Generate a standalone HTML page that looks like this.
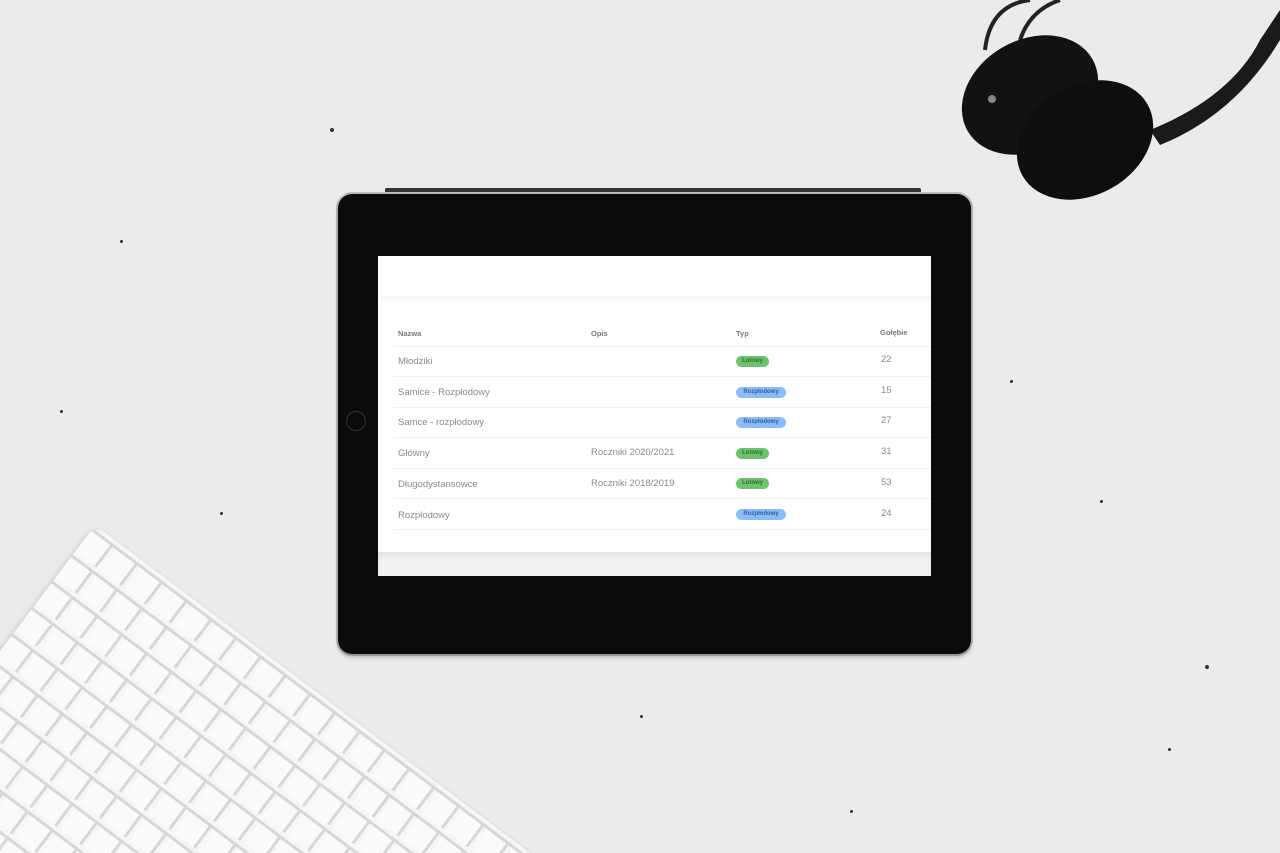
<!DOCTYPE html>
<html><head><style>
html,body{margin:0;padding:0;width:1280px;height:853px;overflow:hidden}
body{position:relative;background:#eaecec;font-family:"Liberation Sans",sans-serif}
.clip{position:absolute;left:0;top:0;width:1280px;height:853px;overflow:hidden}
.dot{position:absolute;background:#333;border-radius:50%}
.tab{position:absolute;left:338px;top:194px;width:633px;height:460px;background:#0b0b0b;border-radius:14px;box-shadow:0 3px 4px rgba(0,0,0,.25),0 0 0 2px #bdbdbd}
.bar{position:absolute;left:385px;top:188px;width:536px;height:7px;background:#333;border-radius:2px}
.screen{position:absolute;left:378px;top:256px;width:553px;height:320px;background:#fff;overflow:hidden}
.hdr{position:absolute;left:0;top:0;width:100%;height:40px;background:#fff;box-shadow:0 3px 6px rgba(0,0,0,.06)}
.foot{position:absolute;left:0;top:296px;width:100%;height:24px;background:#f3f3f3;box-shadow:inset 0 4px 6px rgba(0,0,0,.07)}
.t{position:absolute;font-size:9.5px;color:#8a8a8a;white-space:nowrap}
.h{font-size:7.5px;font-weight:bold;color:#777}
.line{position:absolute;left:15px;right:0;height:1px;background:#f0f0f0}
.b{position:absolute;height:11px;border-radius:6px;font-size:6px;line-height:11px;text-align:center;font-weight:bold}
.g{background:#6cc36e;color:#2d6d2e;width:33px}
.bl{background:#8cbcf7;color:#2d5fa8;width:50px}
.home{position:absolute;left:346px;top:411px;width:20px;height:20px;border-radius:50%;border:1px solid #333;box-sizing:border-box}
.kb{position:absolute;left:95px;top:525px;width:600px;height:330px;transform-origin:0 0;transform:rotate(37deg);background-color:#f5f6f6;border-radius:12px;box-shadow:0 2px 6px rgba(0,0,0,.2);
background-image:repeating-linear-gradient(0deg,transparent 0 26px,#d5d7d8 26px 29px,#f5f6f6 29px 33px),repeating-linear-gradient(90deg,#fafafa 0 24px,#d5d7d8 24px 27px,#f5f6f6 27px 31px)}
</style></head><body>
<div class="clip">
<div class="dot" style="left:330px;top:128px;width:4px;height:4px"></div>
<div class="dot" style="left:220px;top:512px;width:3px;height:3px"></div>
<div class="dot" style="left:1205px;top:665px;width:4px;height:4px"></div>
<div class="dot" style="left:1168px;top:748px;width:3px;height:3px"></div>
<div class="dot" style="left:850px;top:810px;width:3px;height:3px"></div>
<div class="dot" style="left:120px;top:240px;width:3px;height:3px"></div>
<div class="dot" style="left:1010px;top:380px;width:3px;height:3px"></div>
<div class="dot" style="left:640px;top:715px;width:3px;height:3px"></div>
<div class="dot" style="left:60px;top:410px;width:3px;height:3px"></div>
<div class="dot" style="left:1100px;top:500px;width:3px;height:3px"></div>
<div class="kb"></div>
</div>
<svg style="position:absolute;left:0;top:0" width="1280" height="853">
<path d="M1150 130 C1200 110 1240 80 1260 40 L1280 10 L1280 40 C1250 90 1210 125 1160 145 Z" fill="#1a1a1a"/>
<path d="M985 50 Q990 5 1030 0 M1020 40 Q1030 10 1060 0" stroke="#222" stroke-width="4" fill="none"/>
<ellipse cx="1030" cy="95" rx="72" ry="55" transform="rotate(-30 1030 95)" fill="#121212"/>
<ellipse cx="1085" cy="140" rx="72" ry="55" transform="rotate(-30 1085 140)" fill="#0e0e0e"/>
<circle cx="992" cy="99" r="4" fill="#888"/>
</svg>
<div class="bar"></div>
<div class="tab"></div>
<div class="home"></div>
<div class="screen">
<div class="hdr"></div>
<div class="t h" style="left:20px;top:73px">Nazwa</div>
<div class="t h" style="left:213px;top:73px">Opis</div>
<div class="t h" style="left:358px;top:73px">Typ</div>
<div class="t h" style="left:502px;top:72px">Gołębie</div>
<div class="line" style="top:90px"></div>
<div class="t" style="left:20px;top:100px">Młodziki</div><div class="b g" style="left:358px;top:100px">Lotowy</div><div class="t" style="left:503px;top:98px">22</div>
<div class="line" style="top:120px"></div>
<div class="t" style="left:20px;top:131px">Samice - Rozpłodowy</div><div class="b bl" style="left:358px;top:131px">Rozpłodowy</div><div class="t" style="left:503px;top:129px">15</div>
<div class="line" style="top:151px"></div>
<div class="t" style="left:20px;top:161px">Samce - rozpłodowy</div><div class="b bl" style="left:358px;top:161px">Rozpłodowy</div><div class="t" style="left:503px;top:159px">27</div>
<div class="line" style="top:181px"></div>
<div class="t" style="left:20px;top:192px">Główny</div><div class="t" style="left:213px;top:191px">Roczniki 2020/2021</div><div class="b g" style="left:358px;top:192px">Lotowy</div><div class="t" style="left:503px;top:190px">31</div>
<div class="line" style="top:212px"></div>
<div class="t" style="left:20px;top:223px">Długodystansowce</div><div class="t" style="left:213px;top:222px">Roczniki 2018/2019</div><div class="b g" style="left:358px;top:222px">Lotowy</div><div class="t" style="left:503px;top:221px">53</div>
<div class="line" style="top:242px"></div>
<div class="t" style="left:20px;top:254px">Rozpłodowy</div><div class="b bl" style="left:358px;top:253px">Rozpłodowy</div><div class="t" style="left:503px;top:252px">24</div>
<div class="line" style="top:273px"></div>
<div class="foot"></div>
</div>
</body></html>
